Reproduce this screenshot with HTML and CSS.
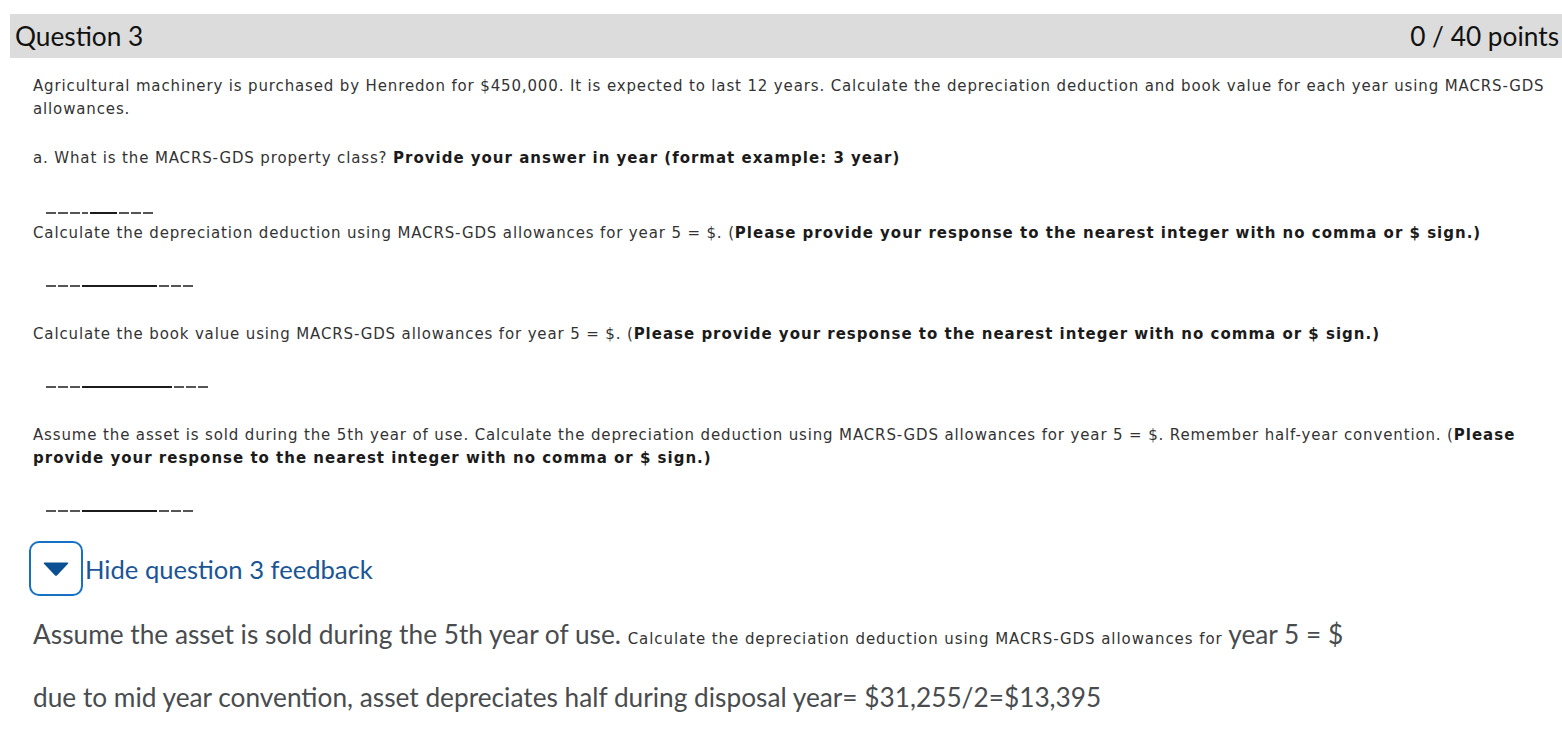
FILE: index.html
```html
<!DOCTYPE html>
<html lang="en">
<head>
<meta charset="utf-8">
<title>Question 3</title>
<link rel="stylesheet" href="styles.css">
</head>
<body>
<div class="question">
  <div class="q-header">
    <h2 class="q-title">Question 3</h2>
    <span class="q-points">0 / 40 points</span>
  </div>
  <div class="q-body">
    <p class="para intro">Agricultural machinery is purchased by Henredon for $450,000. It is expected to last 12 years. Calculate the depreciation deduction and book value for each year using <span class="nowrap">MACRS-GDS</span> allowances.</p>

    <p class="para part">a. What is the MACRS-GDS property class? <b>Provide your answer in year (format example: 3 year)</b></p>
    <div class="blank first"><span class="dash d4"></span><span class="solid w27"></span><span class="dash d3"></span></div>

    <p class="para">Calculate the depreciation deduction using MACRS-GDS allowances for year 5 = $. (<b>Please provide your response to the nearest integer with no comma or $ sign.)</b></p>
    <div class="blank"><span class="dash d3"></span><span class="solid w75"></span><span class="dash d3"></span></div>

    <p class="para">Calculate the book value using MACRS-GDS allowances for year 5 = $. (<b>Please provide your response to the nearest integer with no comma or $ sign.)</b></p>
    <div class="blank"><span class="dash d3"></span><span class="solid w90"></span><span class="dash d3"></span></div>

    <p class="para">Assume the asset is sold during the 5th year of use. Calculate the depreciation deduction using MACRS-GDS allowances for year 5 = $. Remember half-year convention. (<b>Please provide your response to the nearest integer with no comma or $ sign.)</b></p>
    <div class="blank last"><span class="dash d3"></span><span class="solid w75"></span><span class="dash d3"></span></div>

    <div class="feedback-toggle">
      <button class="toggle-btn" type="button" aria-label="Hide question 3 feedback">
        <svg width="26" height="14" viewBox="0 0 26 14"><path d="M1.5 0.5 H24.5 Q26 0.5 25 1.8 L14.2 13.2 Q13 14.3 11.8 13.2 L1 1.8 Q0 0.5 1.5 0.5 Z" fill="#0b4f94"/></svg>
      </button>
      <span class="toggle-label">Hide question 3 feedback</span>
    </div>

    <div class="feedback">
      <p class="fb-line">Assume the asset is sold during the 5th year of use. <span class="fb-small">Calculate the depreciation deduction using MACRS-GDS allowances for </span>year 5 = $</p>
      <p class="fb-line">due to mid year convention, asset depreciates half during disposal year= $31,255/2=$13,395</p>
    </div>
  </div>
</div>
</body>
</html>
```
FILE: styles.css
```css
* { box-sizing: border-box; }
html, body { margin: 0; padding: 0; background: #fff; }
body { font-family: "DejaVu Sans", Verdana, sans-serif; color: #333; }

.question { padding-top: 14px; }

.q-header {
  margin-left: 10px;
  height: 44px;
  background: #dcdcdc;
  display: flex;
  align-items: center;
  justify-content: space-between;
  padding: 0 3px 0 5px;
  font-family: Lato, "Liberation Sans", sans-serif;
  color: #111;
}
.q-title { margin: 0; font-size: 26.25px; font-weight: 400; }
.q-points { font-size: 26.25px; font-weight: 400; }

.q-body { padding: 0 0 0 33px; }

.para {
  margin: 0;
  font-size: 15px;
  line-height: 23px;
  letter-spacing: 0.86px;
}
.para b { color: #1b1b1b; letter-spacing: 1px; }
.nowrap { white-space: nowrap; }
.intro { margin-top: 17px; }
.part { margin-top: 26px; }

.blank {
  display: flex;
  align-items: center;
  gap: 2px;
  margin: 40px 0 36px 13px;
  height: 2px;
}
.blank.first { margin-top: 42px; margin-bottom: 8px; }
.blank.last { margin-bottom: 29px; }

.dash {
  height: 2px;
  background: repeating-linear-gradient(to right, #555 0 10px, transparent 10px 12px);
}
.d3 { width: 34px; }
.d4 { width: 42px; }
.solid { height: 2px; background: #1c1c1c; }
.w27 { width: 27px; }
.w75 { width: 75px; }
.w90 { width: 90px; }

.feedback-toggle {
  display: flex;
  align-items: center;
  gap: 2px;
  margin-left: -4px;
}
.toggle-btn {
  width: 54px;
  height: 55px;
  border: 2px solid #1471c4;
  border-radius: 10px;
  background: #fff;
  display: flex;
  align-items: center;
  justify-content: center;
  padding: 0;
}
.toggle-label {
  font-family: Lato, "Liberation Sans", sans-serif;
  font-size: 25.6px;
  color: #1a5596;
}

.feedback {
  font-family: Lato, "Liberation Sans", sans-serif;
  color: #494c4e;
}
.fb-line {
  margin: 0;
  font-size: 26.25px;
  line-height: 36px;
}
.feedback .fb-line:first-child { margin-top: 20px; }
.feedback .fb-line + .fb-line { margin-top: 22px; }
.fb-small {
  font-family: "DejaVu Sans", Verdana, sans-serif;
  font-size: 15px;
  letter-spacing: 0.93px;
  color: #333;
}
```
